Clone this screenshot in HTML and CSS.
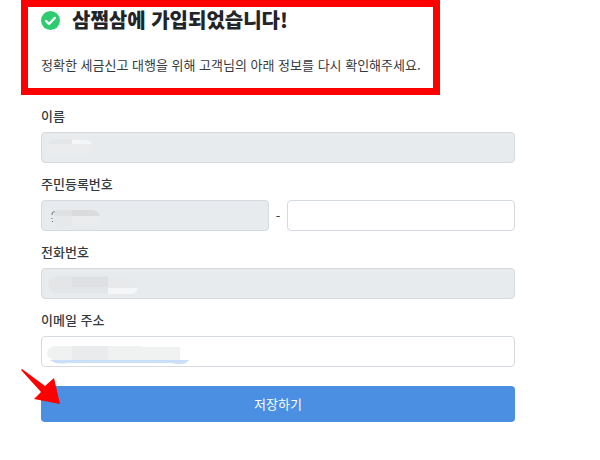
FILE: index.html
```html
<!DOCTYPE html>
<html lang="ko">
<head>
<meta charset="utf-8">
<meta name="viewport" content="width=device-width, initial-scale=1">
<title>가입 완료</title>
<link rel="stylesheet" href="styles.css">
</head>
<body>
<main class="page">
  <header class="notice">
    <h1 class="title">
      <svg class="check" viewBox="0 0 20 20" aria-hidden="true"><circle cx="10" cy="10" r="10" fill="#2ecc71"/><path d="M5.400 10.500l3 3.200 6.200-6.500" fill="none" stroke="#fff" stroke-width="2.400" stroke-linecap="round" stroke-linejoin="round"/></svg>
      <span>삼쩜삼에 가입되었습니다!</span>
    </h1>
    <p class="lead">정확한 세금신고 대행을 위해 고객님의 아래 정보를 다시 확인해주세요.</p>
  </header>
  <form class="form">
    <div class="field">
      <label for="name">이름</label>
      <div class="control">
        <input id="name" type="text" disabled>
        <svg class="mask" width="160" height="31" viewBox="0 0 160 31" aria-hidden="true"><rect x="6" y="6" width="45" height="17" rx="8" fill="#ebecee"/><path d="M7 12q2-5 7-5h17v5z" fill="#e5e6e8"/><path d="M31 8h13q5 0 7 4H31z" fill="#f5f6f8"/></svg>
      </div>
    </div>
    <div class="field">
      <label for="rrn-front">주민등록번호</label>
      <div class="pair">
        <div class="control">
          <input id="rrn-front" type="text" disabled>
          <svg class="mask" width="160" height="31" viewBox="0 0 160 31" aria-hidden="true"><path d="M14 12q-3-1-3 3M11 18v1M11 21l1 1" fill="none" stroke="#62666a"/><rect x="12" y="10" width="47" height="16" rx="7" fill="#ebecee"/><path d="M14 11h17v15H19q-7-2-6-8z" fill="#e7e8e9"/><path d="M16 10h15v6H13q0-5 3-6z" fill="#e0e1e2"/><path d="M31 10h21q6 1 7 6H31z" fill="#dadbdd"/></svg>
        </div>
        <span class="dash">-</span>
        <div class="control"><input type="text" aria-label="주민등록번호 뒷자리"></div>
      </div>
    </div>
    <div class="field">
      <label for="phone">전화번호</label>
      <div class="control">
        <input id="phone" type="text" disabled>
        <svg class="mask" width="160" height="31" viewBox="0 0 160 31" aria-hidden="true"><path d="M16 8h51v17H16a8 8 0 0 1 0-17z" fill="#e4e5e7"/><path d="M31 9h36v10H31z" fill="#dfe0e3"/><path d="M67 9h22q8 2 8 11H67z" fill="#e8e9eb"/><path d="M67 20h30q-2 6-8 6H67z" fill="#f5f6f8"/></svg>
      </div>
    </div>
    <div class="field">
      <label for="email">이메일 주소</label>
      <div class="control">
        <input id="email" type="email">
        <svg class="mask" width="160" height="31" viewBox="0 0 160 31" aria-hidden="true"><path d="M9 24h139q-2 4-9 4-6 0-8-1H27q-12 2-18-3z" fill="#cbdff9"/><path d="M15 10h86v1h38v13H12q-6-2-6-7 1-7 9-7z" fill="#f0f2f2"/><path d="M31 10h36v14H31z" fill="#eaebed"/></svg>
      </div>
    </div>
    <div class="actions">
      <button class="submit" type="submit">저장하기</button>
      <svg class="arrow" width="40" height="36" viewBox="0 0 40 36" aria-hidden="true"><path d="M1 0L24 17L33 9L39 35L13 30L20 23L0 1z" fill="#f00"/></svg>
    </div>
  </form>
</main>
</body>
</html>
```
FILE: styles.css
```css
* {
  box-sizing: border-box;
}

body {
  margin: 0;
  background: #fff;
  color: #343a40;
  font-family: "Noto Sans CJK KR", sans-serif;
  font-size: 13px;
  line-height: 20px;
}

.page {
  padding: 0 85px 38px 21px;
}

.notice {
  width: fit-content;
  padding: 0 12px 13px 13px;
  border: 7px solid #f00;
}

.title {
  display: flex;
  align-items: center;
  gap: 12px;
  margin: 0 0 22px;
  color: #212529;
  font-size: 20px;
  font-weight: 900;
  line-height: 26px;
}

.check {
  width: 19px;
  height: 19px;
}

.lead {
  margin: 0;
}

.form {
  display: flex;
  flex-direction: column;
  gap: 12px;
  padding: 12px 0 0 20px;
}

.field {
  display: flex;
  flex-direction: column;
  gap: 7px;
}

.field label {
  font-weight: 500;
  line-height: 18px;
}

.control {
  position: relative;
  flex: 1;
}

.control input {
  display: block;
  width: 100%;
  height: 31px;
  padding: 4px 8px;
  border: 1px solid #d5dae0;
  border-radius: 4px;
  background: #fff;
  color: inherit;
  font: inherit;
}

.control input:disabled {
  background: #e7ebee;
}

.mask {
  position: absolute;
  top: 0;
  left: 0;
  pointer-events: none;
}

.pair {
  display: flex;
  align-items: center;
}

.dash {
  width: 18px;
  text-align: center;
}

.actions {
  position: relative;
  padding-top: 7px;
}

.submit {
  display: block;
  width: 100%;
  height: 36px;
  padding: 0;
  border: 0;
  border-radius: 4px;
  background: #4a8fe2;
  color: #fff;
  font: inherit;
}

.arrow {
  position: absolute;
  top: -10px;
  left: -20px;
  pointer-events: none;
}
```
